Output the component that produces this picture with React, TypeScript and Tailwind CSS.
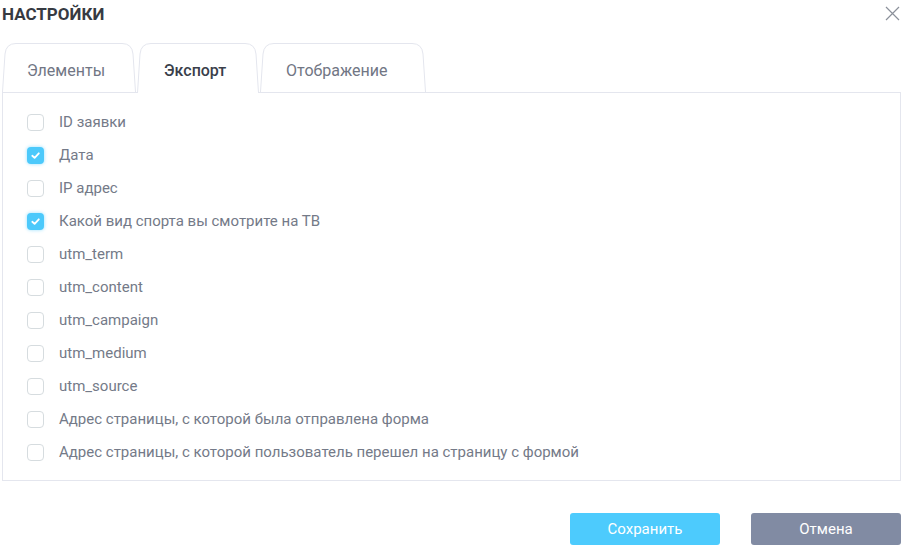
const font = { fontFamily: "Roboto, 'Noto Sans', sans-serif" };

const tabs = [
  { label: "Элементы", width: 134, pad: 25 },
  { label: "Экспорт", width: 122, pad: 27, active: true },
  { label: "Отображение", width: 166, pad: 26 },
];

const fields = [
  { label: "ID заявки", checked: false },
  { label: "Дата", checked: true },
  { label: "IP адрес", checked: false },
  { label: "Какой вид спорта вы смотрите на ТВ", checked: true },
  { label: "utm_term", checked: false },
  { label: "utm_content", checked: false },
  { label: "utm_campaign", checked: false },
  { label: "utm_medium", checked: false },
  { label: "utm_source", checked: false },
  { label: "Адрес страницы, с которой была отправлена форма", checked: false },
  { label: "Адрес страницы, с которой пользователь перешел на страницу с формой", checked: false },
];

function TabShape({ width, active }: { width: number; active?: boolean }) {
  const h = active ? 50 : 49;
  const d = `M0.5,${h} L3,11 Q4,0.5 14,0.5 L${width - 14},0.5 Q${width - 4},0.5 ${width - 3},11 L${width - 0.5},${h}`;
  return (
    <svg className="absolute left-0 top-0" width={width} height={h} viewBox={`0 0 ${width} ${h}`}>
      <path d={d + " Z"} fill="#ffffff" stroke="none" />
      <path d={d} fill="none" stroke="#e4e6ee" strokeWidth="1" />
    </svg>
  );
}

function Tab({ label, width, pad, active }: { label: string; width: number; pad: number; active?: boolean }) {
  return (
    <div
      className={`relative flex h-[49px] shrink-0 items-center pt-[7px] ${active ? "z-10 -mb-px h-[50px] pb-px" : ""}`}
      style={{ width, paddingLeft: pad }}
    >
      <TabShape width={width} active={active} />
      <span className={`relative text-[16px] ${active ? "font-medium text-[#3a3f4b]" : "text-[#717684]"}`}>{label}</span>
    </div>
  );
}

function Checkbox({ checked }: { checked: boolean }) {
  if (checked) {
    return (
      <span className="flex h-[17px] w-[17px] items-center justify-center rounded-[4px] bg-[#4cc9fb] shadow-[0_0_3px_1px_rgba(76,201,251,0.35)]">
        <svg width="11" height="11" viewBox="0 0 12 12">
          <path d="M2.5 6.3 L5 8.6 L9.6 3.6" fill="none" stroke="#fff" strokeWidth="2" strokeLinecap="round" strokeLinejoin="round" />
        </svg>
      </span>
    );
  }
  return <span className="h-[17px] w-[17px] rounded-[4px] border border-[#d6dcdf] bg-white" />;
}

export default function App() {
  return (
    <div className="h-[549px] w-[903px] overflow-hidden bg-white" style={font}>
      <div className="flex h-[43px] items-start justify-between pl-[2px] pr-[3px] pt-[2px]">
        <h1 className="text-[17px] font-bold leading-[24px] text-[#363a42]">НАСТРОЙКИ</h1>
        <svg className="mt-[4px]" width="15" height="15" viewBox="0 0 15 15">
          <path d="M1 1 L14 14 M14 1 L1 14" stroke="#8b909a" strokeWidth="1.2" />
        </svg>
      </div>

      <div className="ml-[2px] mr-[2px]">
        <div className="flex items-end gap-[1px]">
          {tabs.map((t) => (
            <Tab key={t.label} {...t} />
          ))}
        </div>
        <div className="border border-[#e4e6ee] px-[24px] pb-[11px] pt-[13px]">
          {fields.map((f) => (
            <label key={f.label} className="flex h-[33px] items-center gap-[15px]">
              <Checkbox checked={f.checked} />
              <span className="text-[15px] text-[#747a88]">{f.label}</span>
            </label>
          ))}
        </div>
      </div>

      <div className="mt-[32px] flex justify-end gap-[31px] pr-[2px]">
        <button className="h-[32px] w-[150px] rounded-[3px] bg-[#4dcbfd] text-[15px] text-white">Сохранить</button>
        <button className="h-[32px] w-[150px] rounded-[3px] bg-[#818ba3] text-[15px] text-white">Отмена</button>
      </div>
    </div>
  );
}
